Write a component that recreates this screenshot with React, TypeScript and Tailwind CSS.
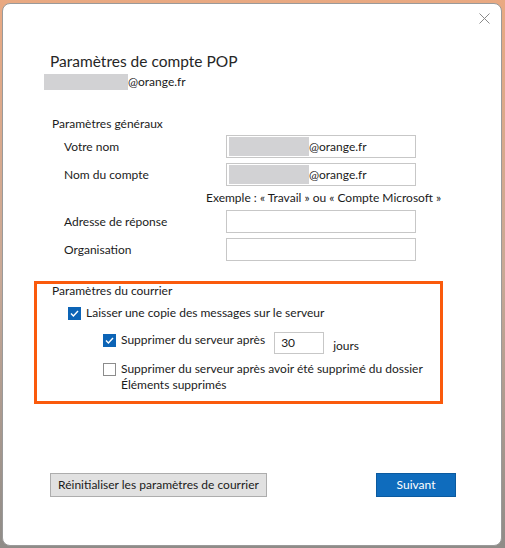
import React from 'react';

const font = { fontFamily: 'Lato, "Noto Sans", "Liberation Sans", sans-serif' };

const CheckBox = ({ checked }: { checked: boolean }) =>
  checked ? (
    <span className="block w-[13px] h-[13px] shrink-0 bg-[#0c64b6] flex items-center justify-center">
      <svg width="9" height="7" viewBox="0 0 9 7">
        <path d="M1 3.6 L3.4 6 L8 1" fill="none" stroke="white" strokeWidth="1.4" />
      </svg>
    </span>
  ) : (
    <span className="block w-[13px] h-[13px] shrink-0 border border-[#8c8c8c] bg-white" />
  );

const TextBox = ({ masked }: { masked?: boolean }) => (
  <div className="w-[190px] h-[23px] border border-[#c7c7c7] bg-white flex items-center pl-[2px]">
    {masked && (
      <>
        <span className="w-[80px] h-[19px] bg-[#d2d2d4]" />
        <span className="text-[12px] text-[#1b1b1b] leading-none">@orange.fr</span>
      </>
    )}
  </div>
);

export default function App() {
  return (
    <div
      className="w-[505px] h-[548px] bg-gradient-to-b from-[#e9a982] via-[#c9a996] to-[#8f8c88] pt-[3px] pl-[2px]"
      style={font}
    >
      <div className="relative w-[500px] h-[543px] bg-white rounded-[8px] border border-[#9a9a9a] text-[#1b1b1b] text-[12px]">
        {/* close */}
        <svg className="absolute right-[11px] top-[9px]" width="11" height="11" viewBox="0 0 11 11">
          <path d="M0.5 0.5 L10.5 10.5 M10.5 0.5 L0.5 10.5" stroke="#8a8a8a" strokeWidth="1" />
        </svg>

        <div className="pt-[47px] pl-[47px] text-[15.5px] leading-[20px] text-[#262626]">
          Paramètres de compte POP
        </div>
        <div className="mt-[3px] ml-[41px] flex items-center h-[16px]">
          <span className="w-[84px] h-[16px] bg-[#d2d2d4]" />
          <span className="leading-[16px]">@orange.fr</span>
        </div>

        {/* general */}
        <div className="mt-[25px] ml-[49px] leading-[18px]">Paramètres généraux</div>
        <div className="ml-[61px] mt-[2px] grid grid-cols-[162px_190px] items-center">
          <span>Votre nom</span>
          <TextBox masked />
          <span className="mt-[5px]">Nom du compte</span>
          <div className="mt-[5px]"><TextBox masked /></div>
          <span />
          <div className="-ml-[20px] h-[24px] leading-[24px] whitespace-nowrap">
            Exemple : « Travail » ou « Compte Microsoft »
          </div>
          <span>Adresse de réponse</span>
          <TextBox />
          <span className="mt-[5px]">Organisation</span>
          <div className="mt-[5px]"><TextBox /></div>
        </div>

        {/* mail settings */}
        <div className="mt-[20px] ml-[31px] w-[409px] h-[123px] border-[3px] border-[#fa5a0c]">
          <div className="pl-[15px] leading-[14px]">Paramètres du courrier</div>
          <div className="mt-[7px] ml-[31px] flex items-center gap-[5px] h-[16px]">
            <CheckBox checked />
            <span>Laisser une copie des messages sur le serveur</span>
          </div>
          <div className="mt-[11px] ml-[66px] flex items-start h-[22px]">
            <div className="flex items-center gap-[5px] mt-[2px] h-[13px]">
              <CheckBox checked />
              <span className="-mt-[2px]">Supprimer du serveur après</span>
            </div>
            <div className="ml-[9px] w-[50px] h-[22px] border border-[#c7c7c7] flex items-center pl-[6px]">30</div>
            <span className="ml-[9px] mt-[5px]">jours</span>
          </div>
          <div className="mt-[7px] ml-[66px] flex items-start gap-[5px]">
            <span className="mt-[2px]"><CheckBox checked={false} /></span>
            <span className="leading-[16px]">
              Supprimer du serveur après avoir été supprimé du dossier
              <br />
              Éléments supprimés
            </span>
          </div>
        </div>

        {/* buttons */}
        <div className="mt-[69px] ml-[47px] mr-[45px] flex justify-between">
          <button className="w-[217px] h-[24px] bg-[#e1e1e1] border border-[#adadad] text-[12px] text-[#1b1b1b] whitespace-nowrap">
            Réinitialiser les paramètres de courrier
          </button>
          <button className="w-[80px] h-[24px] bg-[#0f6cbd] border border-[#0b5a9f] text-[12px] text-white">
            Suivant
          </button>
        </div>
      </div>
    </div>
  );
}
